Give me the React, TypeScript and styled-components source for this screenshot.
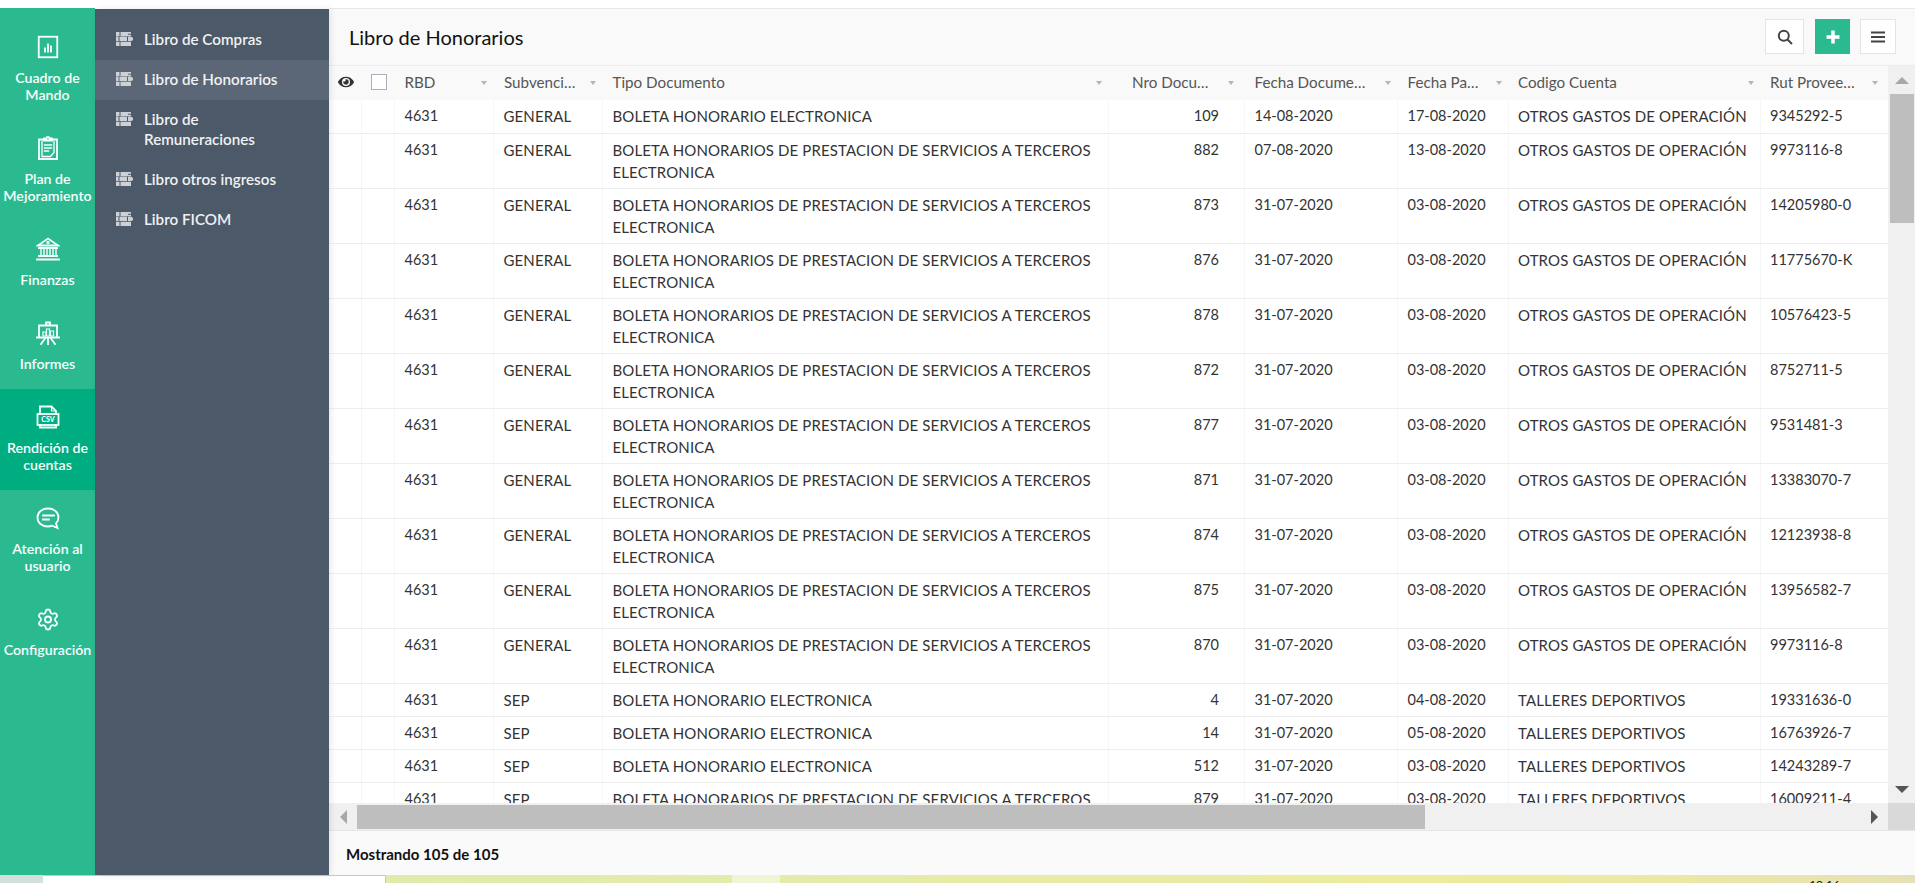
import React from "react";
import styled, { createGlobalStyle } from "styled-components";
import { FaEye } from "react-icons/fa";
import { Settings } from "lucide-react";

const FONT = `Lato, "Open Sans", "Liberation Sans", sans-serif`;
const COLUMNS = "33px 33px 99px 109px 506px 136px 153px 110.5px 252px 127.5px";

const Global = createGlobalStyle`
  html, body { margin: 0; padding: 0; background: #fff; height: 100%; overflow: hidden; }
  * { box-sizing: border-box; }
  body { font-family: ${FONT}; }
`;

const Page = styled.div`
  height: 883px;
  display: flex;
  flex-direction: column;
  padding-top: 8px;
  overflow: hidden;
`;
const Shell = styled.div`
  flex: 1;
  min-height: 0;
  display: flex;
`;

/* Rail */
const Rail = styled.nav`
  width: 95px;
  flex: none;
  background: #2bba90;
  padding-top: 11px;
`;
const RailItem = styled.div<{ $active?: boolean }>`
  padding: 16px 0 17px;
  background: ${(p) => (p.$active ? "#00ad80" : "transparent")};
  display: flex;
  flex-direction: column;
  align-items: center;
  color: #f7fffc;
`;
const RailIcon = styled.div`
  width: 24px;
  height: 24px;
  margin-bottom: 10px;
  display: flex;
  align-items: center;
  justify-content: center;
  svg { display: block; }
`;
const RailLabel = styled.div`
  font-size: 14.2px;
  line-height: 17px;
  font-weight: 600;
  text-align: center;
  white-space: pre-line;
`;

/* Sub menu */
const Panel = styled.aside`
  width: 234px;
  flex: none;
  margin-top: 1px;
  padding-top: 11px;
  background: #4c5968;
  position: relative;
  z-index: 1;
  box-shadow: 2px 0 6px rgba(0, 0, 0, 0.09);
`;
const PanelItem = styled.div<{ $active?: boolean }>`
  display: flex;
  align-items: flex-start;
  gap: 11px;
  padding: 9px 30px 11px 21px;
  background: ${(p) => (p.$active ? "#5b6777" : "transparent")};
  color: #f0f1f2;
  font-size: 15.2px;
  line-height: 20px;
  font-weight: 600;
  svg { flex: none; margin-top: 3px; display: block; }
`;

/* Main */
const Main = styled.main`
  flex: 1;
  min-width: 0;
  display: flex;
  flex-direction: column;
  border-top: 1px solid #e8e8e8;
  background: #fff;
`;
const Header = styled.header`
  height: 56px;
  flex: none;
  background: #f9f9f9;
  display: flex;
  align-items: center;
  padding: 0 19px 1px 20px;
`;
const Title = styled.h1`
  margin: 0;
  flex: 1;
  font-size: 20px;
  font-weight: 400;
  color: #111;
`;
const Tools = styled.div`
  display: flex;
  gap: 10px;
`;
const ToolButton = styled.div<{ $primary?: boolean; $w: number; $mr?: number }>`
  width: ${(p) => p.$w}px;
  height: 35px;
  margin-right: ${(p) => p.$mr ?? 0}px;
  display: flex;
  align-items: center;
  justify-content: center;
  background: ${(p) => (p.$primary ? "#2bba90" : "#fff")};
  border: ${(p) => (p.$primary ? "none" : "1px solid #e4e4e4")};
  color: ${(p) => (p.$primary ? "#fff" : "#444")};
`;

const TableArea = styled.div`
  flex: 1;
  min-height: 0;
  display: flex;
  border-top: 1px solid #ececec;
`;
const TableCol = styled.div`
  flex: 1;
  min-width: 0;
  display: flex;
  flex-direction: column;
  overflow: hidden;
`;
const HeadRow = styled.div`
  display: grid;
  grid-template-columns: ${COLUMNS};
  height: 34px;
  flex: none;
  background: #f9f9f9;
`;
const HeadCell = styled.div<{ $iconCell?: boolean; $pr?: number; $pl?: number }>`
  display: flex;
  align-items: center;
  justify-content: ${(p) => (p.$iconCell ? "center" : "space-between")};
  padding: ${(p) => (p.$iconCell ? "0 0 2px" : `0 ${p.$pr ?? 7}px 3px ${p.$pl ?? 9.5}px`)};
  color: #555;
  font-size: 15.2px;
  white-space: nowrap;
`;
const SortArrow = styled.span`
  width: 0;
  height: 0;
  flex: none;
  margin-top: 3px;
  border-left: 3.5px solid transparent;
  border-right: 3.5px solid transparent;
  border-top: 4px solid #b5b5b5;
`;
const CheckBox = styled.span`
  width: 16px;
  height: 16px;
  display: block;
  background: #fff;
  border: 1px solid #a6afba;
`;
const Body = styled.div`
  flex: 1;
  min-height: 0;
  overflow: hidden;
`;
const Row = styled.div`
  display: grid;
  grid-template-columns: ${COLUMNS};
  border-bottom: 1px solid #eeeeee;
  &:first-child { padding-bottom: 1px; }
`;
const Cell = styled.div<{ $right?: boolean; $pr?: number; $text?: boolean }>`
  padding: 5px ${(p) => p.$pr ?? 8}px 5px 9.5px;
  border-right: 1px solid #f6f6f6;
  color: #333;
  font-size: ${(p) => (p.$text ? "15px" : "14.5px")};
  letter-spacing: ${(p) => (p.$text ? "0.12px" : "0")};
  line-height: 22px;
  text-align: ${(p) => (p.$right ? "right" : "left")};
  &:last-child { border-right: none; }
`;

const VBar = styled.div`
  width: 27px;
  flex: none;
  display: flex;
  flex-direction: column;
  background: #f0f0f0;
`;
const ArrowBox = styled.div<{ $h?: boolean }>`
  flex: none;
  ${(p) => (p.$h ? "width: 28px; height: 100%;" : "height: 28px; width: 100%;")}
  display: flex;
  align-items: center;
  justify-content: center;
`;
const Tri = styled.span<{ $dir: "up" | "down" | "left" | "right"; $dark?: boolean }>`
  width: 0;
  height: 0;
  display: block;
  ${(p) => {
    const c = p.$dark ? "#555" : "#a8a8a8";
    if (p.$dir === "up") return `border-left:7px solid transparent;border-right:7px solid transparent;border-bottom:7px solid ${c};`;
    if (p.$dir === "down") return `border-left:7px solid transparent;border-right:7px solid transparent;border-top:7px solid ${c};`;
    if (p.$dir === "left") return `border-top:7px solid transparent;border-bottom:7px solid transparent;border-right:7px solid ${c};`;
    return `border-top:7px solid transparent;border-bottom:7px solid transparent;border-left:7px solid ${c};`;
  }}
`;
const VThumb = styled.div`
  height: 129px;
  flex: none;
  margin: 0 1px 0 2px;
  background: #bebebe;
`;
const Spacer = styled.div`
  flex: 1;
`;
const HBar = styled.div`
  height: 28px;
  flex: none;
  display: flex;
  background: #f0f0f0;
  border-bottom: 1px solid #e6e6e6;
`;
const HThumb = styled.div`
  width: 1068px;
  flex: none;
  margin: 2px 0 1px;
  background: #bebebe;
`;
const Corner = styled.div`
  width: 27px;
  flex: none;
  background: #d9d9d9;
`;
const Footer = styled.footer`
  height: 44px;
  flex: none;
  background: #fafafa;
  display: flex;
  align-items: center;
  padding: 2px 0 0 17px;
  font-size: 15px;
  font-weight: 700;
  color: #111;
`;

/* Desktop strip under the window */
const Strip = styled.div`
  height: 8px;
  flex: none;
  display: flex;
  overflow: hidden;
  background: linear-gradient(90deg, #dfe9ad 0%, #e4ebab 40%, #ecec9c 75%, #ebeaa2 85%, #e5e1b5 100%);
`;
const StripEdge = styled.div`
  width: 43px;
  background: #d3e0dc;
`;
const StripField = styled.div`
  width: 343px;
  background: #fff;
  border-top: 1px solid #c8c8c8;
  border-right: 1px solid #c8c8c8;
`;
const StripGap = styled.div`
  width: 346px;
`;
const StripGlow = styled.div`
  width: 48px;
  background: #f1f5d6;
`;
const StripClock = styled.div`
  margin-left: auto;
  margin-right: 75px;
  font-size: 12px;
  line-height: 14px;
  padding-top: 3px;
  color: #111;
`;

const C = { fill: "none", stroke: "currentColor", strokeWidth: 1.8, strokeLinecap: "square" as const };

const IconChart = () => (
  <svg width="22" height="24" viewBox="0 0 22 24" {...C}>
    <rect x="1.750" y="1.750" width="18.500" height="20.500" />
    <path d="M8 13.500v3M11 9.500v7M14 11.500v5" />
  </svg>
);
const IconClipboard = () => (
  <svg width="22" height="24" viewBox="0 0 22 24" {...C}>
    <path d="M6.500 3.500H2v19.500h18V3.500h-4.500" />
    <path d="M7 4.500V2.500h2.500a1.500 1.500 0 0 1 3 0H15v2z" />
    <path d="M5 5.500v15h8.500l3.500-4v-11" strokeWidth="1.300" />
    <path d="M7.500 9h7M7.500 12h7M7.500 15h4" strokeWidth="1.400" />
  </svg>
);
const IconBank = () => (
  <svg width="24" height="24" viewBox="0 0 24 24" {...C}>
    <path d="M2 8.500 12 1.500l10 7zM2 8.500h20" />
    <circle cx="12" cy="5.500" r="1.100" strokeWidth="1.200" />
    <path d="M3 11h18M3 19h18M1 22.500h22" />
    <path d="M5 11v8M8 11v8M11 11v8M14 11v8M17 11v8M20 11v8" strokeWidth="1.400" />
  </svg>
);
const IconBoard = () => (
  <svg width="24" height="24" viewBox="0 0 24 24" {...C}>
    <path d="M3 16V4.500h18V16M1 16.500h22M10 4V1.500h4V4" />
    <path d="M7 15v-4h3v4zM10.500 15V8h3v7zM14.500 15v-5h3v5z" strokeWidth="1.200" />
    <path d="M12 17v6M9 17.500 5 23M15 17.500 19 23" />
  </svg>
);
const IconCsv = () => (
  <svg width="24" height="24" viewBox="0 0 24 24" {...C}>
    <path d="M4 9V1.500h11.500L20 6v3" />
    <path d="M15.500 1.500V6H20" strokeWidth="1.200" />
    <rect x="1.500" y="9" width="21" height="11" />
    <path d="M4 20v2.500h16V20" />
    <text x="12" y="17.300" textAnchor="middle" fontSize="7" fontWeight="900" fill="currentColor" stroke="none" fontFamily="Lato, sans-serif">CSV</text>
  </svg>
);
const IconChat = () => (
  <svg width="24" height="24" viewBox="0 0 24 24" {...C}>
    <path d="M12 2.500c6 0 10.500 3.700 10.500 9 0 2.500-1 4.500-2.500 6l1.500 4.500-5.500-2.300c-1.300.5-2.700.8-4 .8-6 0-10.500-3.700-10.500-9s4.500-9 10.500-9z" />
    <path d="M7 9.500h11M7 13.500h6" />
  </svg>
);
const IconGear = () => <Settings size={25} strokeWidth={1.8} />;

const IconLedger = () => (
  <svg width="17" height="14" viewBox="0 0 17 14" fill="#cdd0d4">
    <path d="M0 0h3.500v4.300H0zM4.500 0H15v1.800h-3v1h3v1.500H4.500zM0 4.800h2.500v4.300H0zM3.500 4.800H11v4.300H3.500zM12 4.800h3.500L17 6v2l-1.500 1.100H12zM0 9.700h3.500V14H0zM4.500 9.700H15V14H4.500z" />
  </svg>
);

const RAIL = [
  { label: "Cuadro de\nMando", icon: <IconChart /> },
  { label: "Plan de\nMejoramiento", icon: <IconClipboard /> },
  { label: "Finanzas", icon: <IconBank /> },
  { label: "Informes", icon: <IconBoard /> },
  { label: "Rendición de\ncuentas", icon: <IconCsv />, active: true },
  { label: "Atención al\nusuario", icon: <IconChat /> },
  { label: "Configuración", icon: <IconGear /> },
];
const MENU = [
  { label: "Libro de Compras" },
  { label: "Libro de Honorarios", active: true },
  { label: "Libro de Remuneraciones" },
  { label: "Libro otros ingresos" },
  { label: "Libro FICOM" },
];
const HEADS: { t: string; pr?: number; pl?: number }[] = [
  { t: "RBD" },
  { t: "Subvenci…", pr: 7, pl: 10 },
  { t: "Tipo Documento" },
  { t: "Nro Docu…", pr: 11, pl: 23 },
  { t: "Fecha Docume…" },
  { t: "Fecha Pa…" },
  { t: "Codigo Cuenta" },
  { t: "Rut Provee…", pr: 10 },
];

const SHORT = "BOLETA HONORARIO ELECTRONICA";
const LONG = "BOLETA HONORARIOS DE PRESTACION DE SERVICIOS A TERCEROS ELECTRONICA";
const OTROS = "OTROS GASTOS DE OPERACIÓN";
const TALLER = "TALLERES DEPORTIVOS";
const ROWS: string[][] = [
  ["GENERAL", SHORT, "109", "14-08-2020", "17-08-2020", OTROS, "9345292-5"],
  ["GENERAL", LONG, "882", "07-08-2020", "13-08-2020", OTROS, "9973116-8"],
  ["GENERAL", LONG, "873", "31-07-2020", "03-08-2020", OTROS, "14205980-0"],
  ["GENERAL", LONG, "876", "31-07-2020", "03-08-2020", OTROS, "11775670-K"],
  ["GENERAL", LONG, "878", "31-07-2020", "03-08-2020", OTROS, "10576423-5"],
  ["GENERAL", LONG, "872", "31-07-2020", "03-08-2020", OTROS, "8752711-5"],
  ["GENERAL", LONG, "877", "31-07-2020", "03-08-2020", OTROS, "9531481-3"],
  ["GENERAL", LONG, "871", "31-07-2020", "03-08-2020", OTROS, "13383070-7"],
  ["GENERAL", LONG, "874", "31-07-2020", "03-08-2020", OTROS, "12123938-8"],
  ["GENERAL", LONG, "875", "31-07-2020", "03-08-2020", OTROS, "13956582-7"],
  ["GENERAL", LONG, "870", "31-07-2020", "03-08-2020", OTROS, "9973116-8"],
  ["SEP", SHORT, "4", "31-07-2020", "04-08-2020", TALLER, "19331636-0"],
  ["SEP", SHORT, "14", "31-07-2020", "05-08-2020", TALLER, "16763926-7"],
  ["SEP", SHORT, "512", "31-07-2020", "03-08-2020", TALLER, "14243289-7"],
  ["SEP", LONG, "879", "31-07-2020", "03-08-2020", TALLER, "16009211-4"],
];

export default function App() {
  return (
    <>
      <Global />
      <Page>
        <Shell>
          <Rail>
            {RAIL.map((r) => (
              <RailItem key={r.label} $active={r.active}>
                <RailIcon>{r.icon}</RailIcon>
                <RailLabel>{r.label}</RailLabel>
              </RailItem>
            ))}
          </Rail>
          <Panel>
            {MENU.map((m) => (
              <PanelItem key={m.label} $active={m.active}>
                <IconLedger />
                <span>{m.label}</span>
              </PanelItem>
            ))}
          </Panel>
          <Main>
            <Header>
              <Title>Libro de Honorarios</Title>
              <Tools>
                <ToolButton $w={39} $mr={1}>
                  <svg width="16" height="16" viewBox="0 0 16 16" fill="none" stroke="currentColor" strokeWidth="2">
                    <circle cx="6.800" cy="6.800" r="5" />
                    <path d="M10.500 10.500 15 15" />
                  </svg>
                </ToolButton>
                <ToolButton $w={35} $primary>
                  <svg width="14" height="14" viewBox="0 0 14 14" fill="none" stroke="currentColor" strokeWidth="3.500">
                    <path d="M7 0.500v13M0.500 7h13" />
                  </svg>
                </ToolButton>
                <ToolButton $w={36}>
                  <svg width="14" height="12" viewBox="0 0 14 12" fill="none" stroke="currentColor" strokeWidth="1.800">
                    <path d="M0 1.500h14M0 6h14M0 10.500h14" />
                  </svg>
                </ToolButton>
              </Tools>
            </Header>
            <TableArea>
              <TableCol>
                <HeadRow>
                  <HeadCell $iconCell>
                    <FaEye size={16} color="#333" />
                  </HeadCell>
                  <HeadCell $iconCell>
                    <CheckBox />
                  </HeadCell>
                  {HEADS.map((h) => (
                    <HeadCell key={h.t} $pr={h.pr} $pl={h.pl}>
                      <span>{h.t}</span>
                      <SortArrow />
                    </HeadCell>
                  ))}
                </HeadRow>
                <Body>
                  {ROWS.map((r, i) => (
                    <Row key={i}>
                      <Cell />
                      <Cell />
                      <Cell>4631</Cell>
                      <Cell $text>{r[0]}</Cell>
                      <Cell $text>{r[1]}</Cell>
                      <Cell $right $pr={25}>{r[2]}</Cell>
                      <Cell>{r[3]}</Cell>
                      <Cell>{r[4]}</Cell>
                      <Cell $text>{r[5]}</Cell>
                      <Cell>{r[6]}</Cell>
                    </Row>
                  ))}
                </Body>
              </TableCol>
              <VBar>
                <ArrowBox><Tri $dir="up" /></ArrowBox>
                <VThumb />
                <Spacer />
                <ArrowBox><Tri $dir="down" $dark /></ArrowBox>
              </VBar>
            </TableArea>
            <HBar>
              <ArrowBox $h><Tri $dir="left" /></ArrowBox>
              <HThumb />
              <Spacer />
              <ArrowBox $h><Tri $dir="right" $dark /></ArrowBox>
              <Corner />
            </HBar>
            <Footer>Mostrando 105 de 105</Footer>
          </Main>
        </Shell>
        <Strip>
          <StripEdge />
          <StripField />
          <StripGap />
          <StripGlow />
          <StripClock>10:16</StripClock>
        </Strip>
      </Page>
    </>
  );
}
